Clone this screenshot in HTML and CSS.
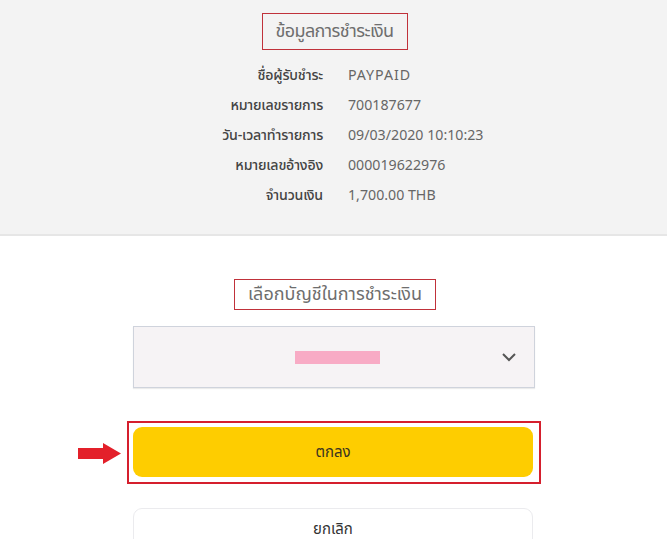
FILE: index.html
```html
<!DOCTYPE html>
<html lang="th">
<head>
<meta charset="utf-8">
<link rel="stylesheet" href="styles.css">
</head>
<body>
<div class="info">
  <div class="title-wrap"><h1 class="boxed title">ข้อมูลการชำระเงิน</h1></div>
  <dl class="rows">
    <div class="row"><dt>ชื่อผู้รับชำระ</dt><dd class="mono">PAYPAID</dd></div>
    <div class="row"><dt>หมายเลขรายการ</dt><dd>700187677</dd></div>
    <div class="row"><dt>วัน-เวลาทำรายการ</dt><dd>09/03/2020 10:10:23</dd></div>
    <div class="row"><dt>หมายเลขอ้างอิง</dt><dd>000019622976</dd></div>
    <div class="row"><dt>จำนวนเงิน</dt><dd>1,700.00 THB</dd></div>
  </dl>
</div>
<div class="pay">
  <div class="title-wrap"><h2 class="boxed subtitle">เลือกบัญชีในการชำระเงิน</h2></div>
  <div class="select">
    <span class="masked"></span>
    <svg class="chev" width="16" height="10" viewBox="0 0 16 10"><path d="M2 2 L8 8 L14 2" fill="none" stroke="#555" stroke-width="2"/></svg>
  </div>
  <div class="ok-row">
    <svg class="arrow" width="43" height="21" viewBox="0 0 43 21"><path d="M0 5 H25 V0 L43 10.5 L25 21 V16 H0 Z" fill="#e3202a"/></svg>
    <div class="ok-frame"><button class="btn ok">ตกลง</button></div>
  </div>
  <div class="cancel-row"><button class="btn cancel">ยกเลิก</button></div>
</div>
</body>
</html>
```
FILE: styles.css
```css
* { box-sizing: border-box; }
html, body { margin: 0; padding: 0; }
body {
  width: 667px; height: 539px; overflow: hidden;
  background: #fff;
  font-family: "Noto Sans Thai", "Noto Sans", "Liberation Sans", sans-serif;
  color: #555;
}
.info {
  background: #f3f3f3;
  height: 236px;
  padding-top: 13px;
  border-bottom: 2px solid #e6e6e6;
}
.title-wrap { display: flex; justify-content: center; }
.boxed {
  margin: 0;
  border: 1px solid #c0313a;
  font-weight: 400;
  color: #6e6e6e;
  line-height: 1;
  white-space: nowrap;
}
.title {
  font-size: 18px;
  letter-spacing: -0.6px;
  width: 146px; height: 37px;
  display: flex; align-items: center; justify-content: center;
  margin-left: 2px;
}
.rows { margin: 10px 0 0; padding: 0; }
.row {
  display: grid;
  grid-template-columns: 323px 1fr;
  column-gap: 25px;
  height: 30.2px;
  align-items: center;
  font-size: 14.2px;
}
.row dt { text-align: right; color: #444; font-weight: 500; letter-spacing: -0.2px; }
.row dd { margin: 0; color: #666; }
.mono { letter-spacing: 1px; }
.pay { padding-top: 43px; }
.subtitle {
  font-size: 18px;
  width: 202px; height: 31px;
  display: flex; align-items: center; justify-content: center;
  margin-left: 3px;
}
.select {
  margin: 16px 0 0 133px;
  width: 402px; height: 62px;
  background: #f6f3f5;
  border: 1px solid #cfd3dc;
  box-shadow: 0 1px 1px rgba(0,0,0,0.08);
  display: flex; align-items: center;
}
.masked {
  margin-left: 161px;
  width: 85px; height: 13px;
  background: #f8abc5;
}
.chev { margin-left: auto; margin-right: 17px; }
.ok-row {
  display: flex; align-items: center;
  margin-top: 33px;
  padding-left: 78px;
}
.arrow { margin-right: 6px; margin-top: 1px; }
.ok-frame {
  border: 2.5px solid #d51f2d;
  padding: 4px 5px 4px 4px;
  width: 414px; height: 63px;
}
.btn {
  font-family: inherit;
  display: flex; align-items: center; justify-content: center;
  width: 400px; height: 50px;
  border-radius: 9px;
  font-size: 15px;
}
.ok {
  background: #fecd00;
  border: none;
  color: #3a3320;
}
.cancel-row { margin: 24px 0 0 133px; }
.cancel {
  background: #fff;
  border: 1px solid #ebebee;
  color: #333;
  align-items: flex-start;
  padding-top: 13px;
  line-height: 1;
}
```
